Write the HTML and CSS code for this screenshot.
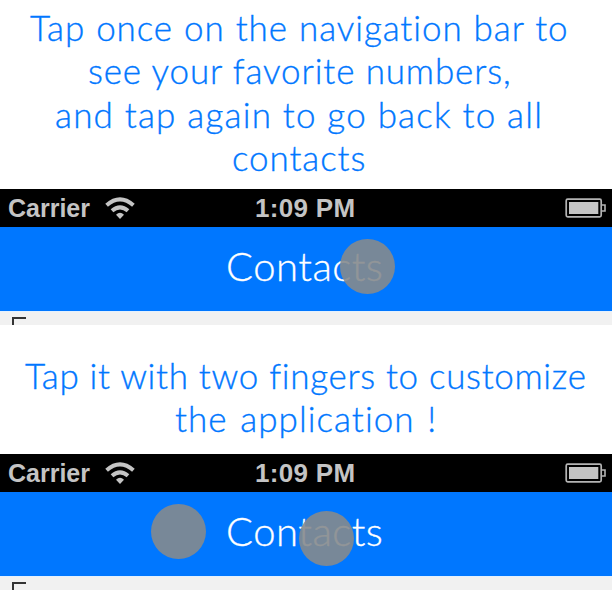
FILE: index.html
```
<!DOCTYPE html>
<html lang="en">
<head>
<meta charset="utf-8">
<title>Contacts help</title>
<link rel="stylesheet" href="styles.css">
</head>
<body>
<svg width="0" height="0" class="defs">
  <symbol id="wifi" viewBox="0 0 30 23">
    <g fill="none" stroke="#c4c4c4" stroke-width="4">
      <path d="M1.6 8.2Q15 -3.6 28.4 8.2"/>
      <path d="M7 13.8Q15 6.8 23 13.8"/>
    </g>
    <path d="M11 17.8Q15 13.8 19 17.8L15 22Z" fill="#c4c4c4"/>
  </symbol>
  <symbol id="battery" viewBox="0 0 42 20">
    <rect x="1.2" y="1.2" width="35" height="17.6" rx="1.5" fill="none" stroke="#b4b4b4" stroke-width="1.7"/>
    <rect x="4" y="4" width="29.3" height="12" fill="#c4c4c4"/>
    <path d="M37 7H40V13H37" fill="none" stroke="#b4b4b4" stroke-width="1.6"/>
  </symbol>
</svg>
<main>
  <h2 class="tip tip-first">
    <span class="line l1">Tap once on the navigation bar to</span>
    <span class="line l2">see your favorite numbers,</span>
    <span class="line l3">and tap again to go back to all</span>
    <span class="line l4">contacts</span>
  </h2>
  <section class="phone">
    <div class="status"><span class="carrier">Carrier</span><svg class="wifi"><use href="#wifi"/></svg><span class="time">1:09 PM</span><svg class="battery"><use href="#battery"/></svg></div>
    <div class="nav"><span class="title">Contacts</span><i class="touch touch-one"></i></div>
    <div class="list"><i class="letter"></i></div>
  </section>
  <h2 class="tip tip-second">
    <span class="line l5">Tap it with two fingers to customize</span>
    <span class="line l6">the application !</span>
  </h2>
  <section class="phone">
    <div class="status"><span class="carrier">Carrier</span><svg class="wifi"><use href="#wifi"/></svg><span class="time">1:09 PM</span><svg class="battery"><use href="#battery"/></svg></div>
    <div class="nav"><span class="title">Contacts</span><i class="touch touch-left"></i><i class="touch touch-right"></i></div>
    <div class="list"><i class="letter"></i></div>
  </section>
</main>
</body>
</html>
```
FILE: styles.css
```
* { box-sizing: border-box; }
body { margin: 0; background: #fff; width: 612px; height: 612px; overflow: hidden; }
.defs { display: block; }
.tip { margin: 0; color: #0077ff; font: 300 35px/43.4px Lato, "Open Sans", sans-serif; font-kerning: normal; font-variant-ligatures: none; -webkit-text-stroke: .35px currentColor; }
.tip-first { height: 189px; padding-top: 6px; }
.tip-second { height: 129px; padding-top: 29px; }
.line { display: block; width: max-content; white-space: nowrap; }
.l1 { margin-left: 30px; letter-spacing: .92px; word-spacing: .6px; }
.l2 { margin-left: 88px; letter-spacing: .87px; }
.l3 { margin-left: 55px; letter-spacing: 1.2px; }
.l4 { margin-left: 232px; letter-spacing: .9px; }
.l5 { margin-left: 25px; letter-spacing: .68px; }
.l6 { margin-left: 175px; letter-spacing: 1.05px; word-spacing: 2px; }
.phone { height: 136px; }
.status { height: 38px; background: #000; display: flex; align-items: center; color: #c4c4c4; font: bold 25px/38px "Liberation Sans", Arial, sans-serif; }
.carrier { width: 98px; padding-left: 8px; }
.wifi { width: 30px; height: 23px; margin-left: 7px; }
.time { margin-left: 120px; width: 110px; white-space: nowrap; font-size: 26px; letter-spacing: .3px; }
.battery { width: 42px; height: 20px; margin-left: auto; margin-right: 5px; }
.nav { position: relative; height: 84px; background: #0077ff; }
.title { display: block; padding-left: 226px; color: #fff; font: 300 40px/79px Lato, "Open Sans", sans-serif; letter-spacing: .5px; -webkit-text-stroke: .3px currentColor; }
.touch { position: absolute; width: 55px; height: 55px; border-radius: 50%; background: rgba(133, 138, 141, .9); }
.touch-one { left: 340px; top: 12px; }
.touch-left { left: 151px; top: 12px; }
.touch-right { left: 299px; top: 19px; }
.list { height: 14px; background: #f1f1f1; border-top: 1px solid #e3f1ff; padding: 5px 0 0 12px; }
.letter { display: block; width: 14px; height: 8px; border: solid #333; border-width: 2px 0 0 2px; }
```
